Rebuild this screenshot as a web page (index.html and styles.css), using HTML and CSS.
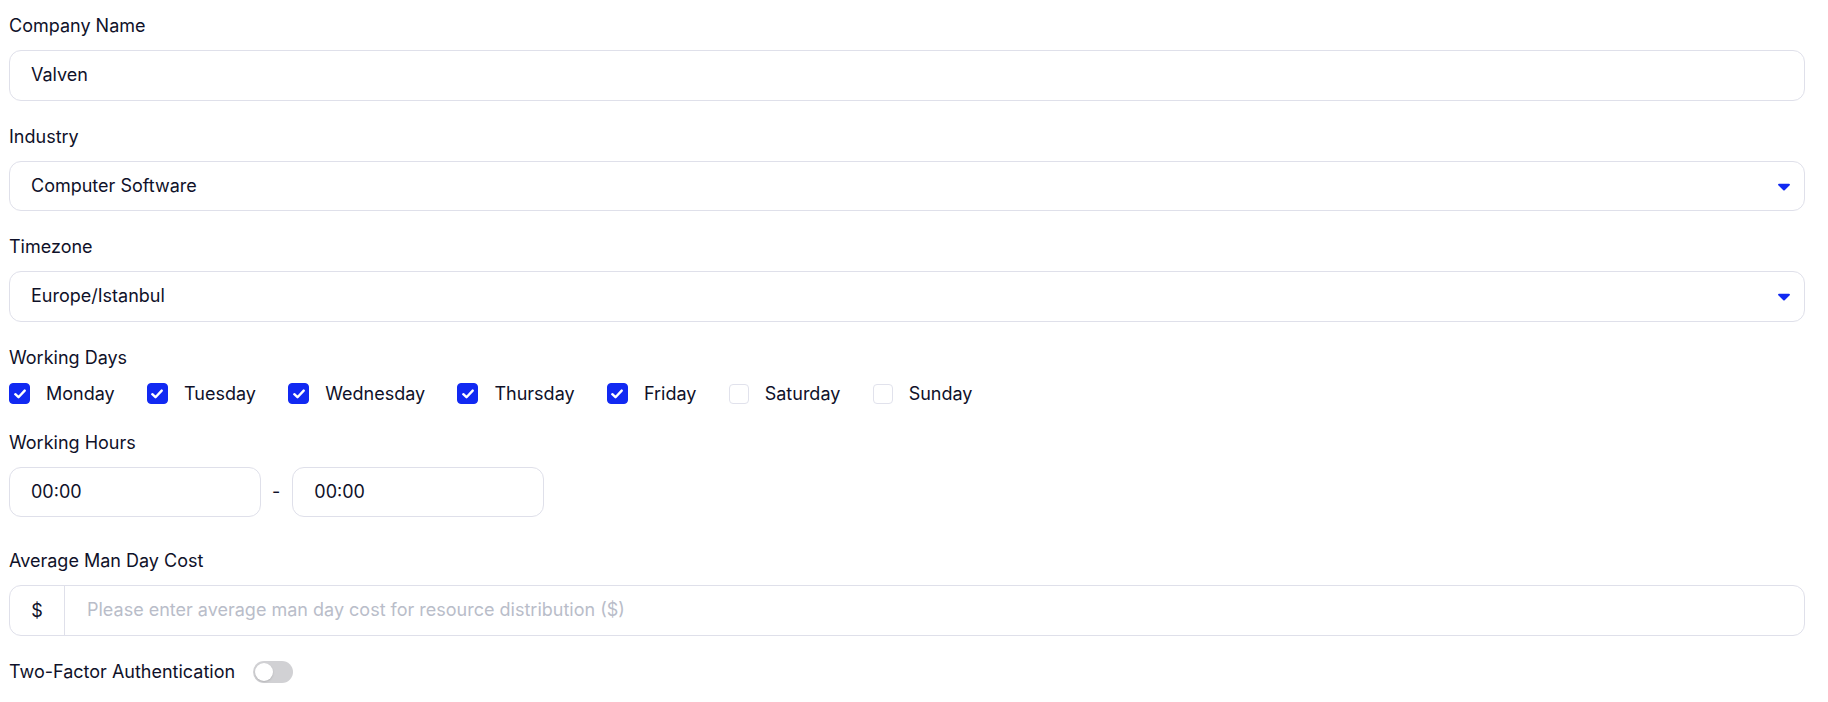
FILE: index.html
```html
<!DOCTYPE html>
<html lang="en">
<head>
<meta charset="utf-8">
<title>Company Settings</title>
<link rel="stylesheet" href="styles.css">
</head>
<body>
<form class="form">
  <div class="field">
    <label class="label">Company Name</label>
    <div class="control"><span class="value">Valven</span></div>
  </div>
  <div class="field">
    <label class="label">Industry</label>
    <div class="control select"><span class="value">Computer Software</span>
      <svg class="caret" width="12" height="8" viewBox="0 0 12 8"><path d="M1 0.8h10a0.9 0.9 0 0 1 0.7 1.5L6.7 7.2a1 1 0 0 1-1.4 0L0.3 2.3A0.9 0.9 0 0 1 1 0.8z" fill="#1129f2"/></svg>
    </div>
  </div>
  <div class="field">
    <label class="label">Timezone</label>
    <div class="control select"><span class="value">Europe/Istanbul</span>
      <svg class="caret" width="12" height="8" viewBox="0 0 12 8"><path d="M1 0.8h10a0.9 0.9 0 0 1 0.7 1.5L6.7 7.2a1 1 0 0 1-1.4 0L0.3 2.3A0.9 0.9 0 0 1 1 0.8z" fill="#1129f2"/></svg>
    </div>
  </div>
  <div class="field days-field">
    <label class="label">Working Days</label>
    <div class="days">
      <span class="day"><span class="box checked"><svg width="12" height="10" viewBox="0 0 12 10"><path d="M1.3 5.2l3.2 3L10.7 1.6" fill="none" stroke="#fff" stroke-width="2.4" stroke-linecap="round" stroke-linejoin="round"/></svg></span>Monday</span>
      <span class="day"><span class="box checked"><svg width="12" height="10" viewBox="0 0 12 10"><path d="M1.3 5.2l3.2 3L10.7 1.6" fill="none" stroke="#fff" stroke-width="2.4" stroke-linecap="round" stroke-linejoin="round"/></svg></span>Tuesday</span>
      <span class="day"><span class="box checked"><svg width="12" height="10" viewBox="0 0 12 10"><path d="M1.3 5.2l3.2 3L10.7 1.6" fill="none" stroke="#fff" stroke-width="2.4" stroke-linecap="round" stroke-linejoin="round"/></svg></span>Wednesday</span>
      <span class="day"><span class="box checked"><svg width="12" height="10" viewBox="0 0 12 10"><path d="M1.3 5.2l3.2 3L10.7 1.6" fill="none" stroke="#fff" stroke-width="2.4" stroke-linecap="round" stroke-linejoin="round"/></svg></span>Thursday</span>
      <span class="day"><span class="box checked"><svg width="12" height="10" viewBox="0 0 12 10"><path d="M1.3 5.2l3.2 3L10.7 1.6" fill="none" stroke="#fff" stroke-width="2.4" stroke-linecap="round" stroke-linejoin="round"/></svg></span>Friday</span>
      <span class="day"><span class="box"></span>Saturday</span>
      <span class="day"><span class="box"></span>Sunday</span>
    </div>
  </div>
  <div class="field hours-field">
    <label class="label">Working Hours</label>
    <div class="hours">
      <div class="control time"><span class="value">00:00</span></div>
      <span class="dash">-</span>
      <div class="control time"><span class="value">00:00</span></div>
    </div>
  </div>
  <div class="field">
    <label class="label">Average Man Day Cost</label>
    <div class="control addon-control">
      <span class="addon">$</span>
      <span class="placeholder">Please enter average man day cost for resource distribution ($)</span>
    </div>
  </div>
  <div class="toggle-row">
    <span class="label">Two-Factor Authentication</span>
    <span class="toggle"><span class="knob"></span></span>
  </div>
</form>
</body>
</html>
```

FILE: styles.css
```css
* { box-sizing: border-box; }
html, body { margin: 0; padding: 0; background: #ffffff; }
body {
  font-family: Inter, "Noto Sans", "Liberation Sans", sans-serif;
  font-size: 18px;
  color: #0f1129;
}
.form {
  width: 1796px;
  margin-left: 9px;
  padding-top: 14px;
}
.field { margin-bottom: 24px; }
.label {
  display: block;
  line-height: 24px;
  margin-bottom: 12px;
  color: #0f1129;
}
.control {
  height: 50.5px;
  border: 1px solid #dfe0ea;
  border-radius: 12px;
  display: flex;
  align-items: center;
  padding: 0 14px 0 21px;
  background: #fff;
}
.value { line-height: 24px; }
.select { justify-content: space-between; }
.caret { display: block; margin-top: 2px; }
.days-field { margin-bottom: 25px; }
.days {
  display: flex;
  align-items: center;
  gap: 32.3px;
  height: 24px;
}
.day {
  display: flex;
  align-items: center;
  gap: 16px;
  line-height: 24px;
}
.box {
  width: 20px;
  height: 20px;
  border: 1px solid #e1e2ec;
  border-radius: 4px;
  display: flex;
  align-items: center;
  justify-content: center;
  background: #fff;
}
.box.checked {
  width: 21px;
  height: 21px;
  background: #1129f2;
  border-color: #1129f2;
}
.hours-field { margin-bottom: 32px; }
.hours { display: flex; align-items: center; }
.time { width: 252px; }
.dash { padding: 0 12px 0 11px; line-height: 24px; }
.addon-control { padding: 0; }
.addon {
  width: 55px;
  height: 100%;
  display: flex;
  align-items: center;
  justify-content: center;
  border-right: 1px solid #dfe0ea;
}
.placeholder {
  padding-left: 22px;
  color: #b9bdc9;
  line-height: 24px;
}
.toggle-row {
  display: flex;
  align-items: center;
  gap: 18px;
  height: 24px;
}
.toggle-row .label { margin: 0; }
.toggle {
  width: 40px;
  height: 22px;
  border-radius: 11px;
  background: #d1d1d4;
  position: relative;
  display: block;
}
.knob {
  position: absolute;
  left: 2px;
  top: 2px;
  width: 18px;
  height: 18px;
  border-radius: 50%;
  background: #fff;
  box-shadow: 0 1px 2px rgba(0,0,0,0.15);
}
```
